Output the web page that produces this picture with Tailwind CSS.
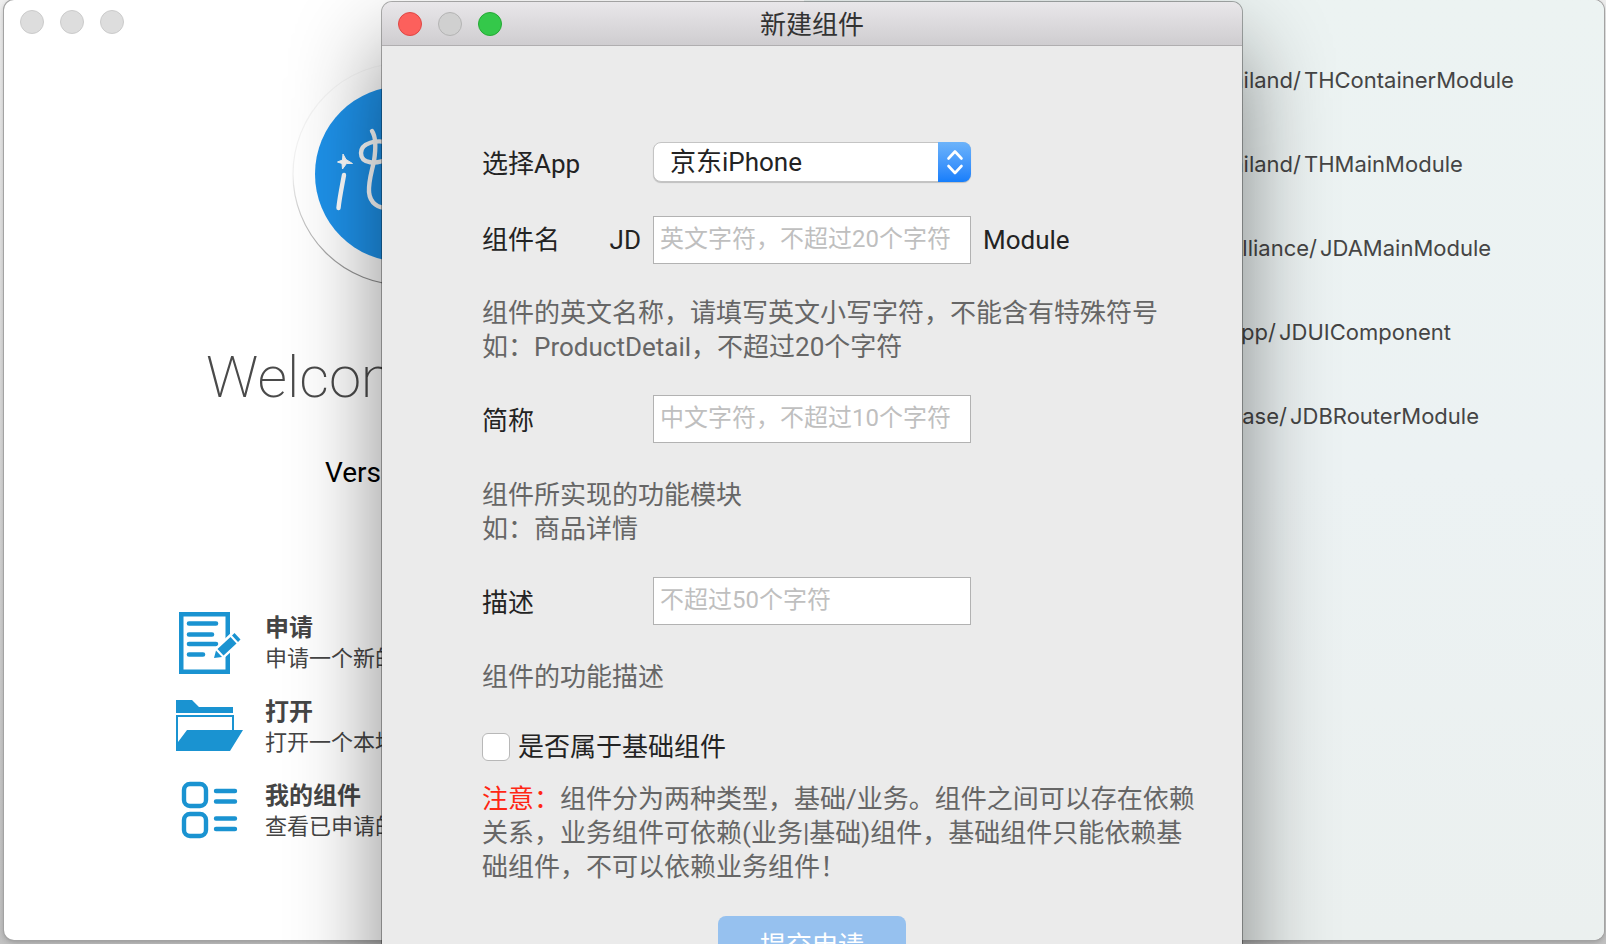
<!DOCTYPE html>
<html lang="zh-CN">
<head>
  <meta charset="UTF-8" />
  <meta name="viewport" content="width=device-width, initial-scale=1.0" />
  <title>新建组件</title>
  <script src="https://cdn.jsdelivr.net/npm/@tailwindcss/browser@4"></script>
</head>
<body class="font-['Roboto','Noto_Sans_CJK_SC',sans-serif] text-[#232323]">
  <main class="relative h-screen overflow-hidden bg-linear-to-b from-[#efefef] via-[#d8d8d8] to-[#c2c2c2] pb-1 pl-1 pr-[2px]">

    <!-- Welcome window -->
    <div class="flex h-full overflow-hidden rounded-[10px] bg-white shadow-[0_0_0_1px_#a3a3a3,0_2px_6px_#00000040]">
      <section class="relative w-1/2 shrink-0 pt-[62px]">
        <div class="absolute left-4 top-[10px] flex gap-4">
          <span class="size-6 rounded-full border border-[#cbcbcb] bg-[#dddddd]"></span>
          <span class="size-6 rounded-full border border-[#cbcbcb] bg-[#dddddd]"></span>
          <span class="size-6 rounded-full border border-[#cbcbcb] bg-[#dddddd]"></span>
        </div>

        <svg class="mx-auto size-56" viewBox="0 0 224 224" fill="none">
          <defs>
            <linearGradient id="ring" x1="0" y1="0" x2="0" y2="1">
              <stop offset="0" stop-color="#f8f8f8" />
              <stop offset=".5" stop-color="#f0f0f0" />
              <stop offset="1" stop-color="#8a8a8a" />
            </linearGradient>
          </defs>
          <circle cx="112" cy="112" r="111" fill="#fff" stroke="url(#ring)" stroke-width="1.2" />
          <circle cx="111" cy="112" r="88" fill="#1e92ea" />
          <g stroke="#fff" stroke-width="4.4" stroke-linecap="round">
            <path d="M52 113C50 124 47.500 136 46.500 146" />
            <path d="M80 69C84 75 84 86 82 99C79 113 76.500 119 77 130C78 141 86 147 98 146" />
            <path d="M98 81C84 77 69 81 69 91C69 102 84 103 98 96" />
          </g>
          <path d="M51 92L54 97.500L60.500 101.500L54.500 101.500L50.500 107L50 101.500L45.500 100L50.500 98Z" fill="#fff" stroke="#fff" />
        </svg>

        <h1 class="mx-auto mt-[55px] w-[396px] text-[58px] font-extralight leading-[72px] text-[#4a4a4a]">Welcome</h1>
        <p class="mx-auto mt-[42px] w-[158px] text-[28px] leading-9 text-black">Version</p>

        <nav class="mt-[120px] flex flex-col gap-5 pl-[169px] text-[#454545]">
          <a href="#" class="flex h-16 items-center gap-5">
            <svg class="size-[72px] shrink-0" viewBox="0 0 72 72" fill="#1a93d1">
              <path fill-rule="evenodd" d="M6 5H57V67H6ZM10.500 9.500V62.500H52.500V9.500Z" />
              <g stroke="#1a93d1" stroke-width="4.600" stroke-linecap="round">
                <path d="M16 16.500H43M16 27.500H39M16 37H43M16 47.500H30" />
              </g>
              <path d="M40 52L43 42L61 25L69 33L50 50Z" fill="#fff" stroke="#fff" stroke-width="3" />
              <path d="M41 51L43 43.500L49 50ZM44.500 42L57.500 30L63.500 36.500L50.500 48.500ZM59 28.500L61.500 26L67.500 32.500L65 35Z" />
            </svg>
            <span>
              <span class="block text-2xl font-bold leading-8">申请</span>
              <span class="block whitespace-nowrap text-[22px] leading-[30px]">申请一个新的组件</span>
            </span>
          </a>
          <a href="#" class="flex h-16 items-center gap-5">
            <svg class="size-[72px] shrink-0" viewBox="0 0 72 72" fill="#1a93d1">
              <path d="M3 9H19L26 16H60V22H3Z" />
              <path fill-rule="evenodd" d="M3 24H61V39H70L57 60H3ZM5 26V51L14 39H59V26Z" />
            </svg>
            <span>
              <span class="block text-2xl font-bold leading-8">打开</span>
              <span class="block whitespace-nowrap text-[22px] leading-[30px]">打开一个本地组件</span>
            </span>
          </a>
          <a href="#" class="flex h-16 items-center gap-5">
            <svg class="size-[72px] shrink-0" viewBox="0 0 72 72" fill="none" stroke="#1a93d1" stroke-width="4.400" stroke-linecap="round">
              <rect x="11" y="9" width="22" height="22" rx="6" />
              <rect x="11" y="39" width="22" height="22" rx="6" />
              <path d="M43 16H62M43 26.500H62M43 43.500H62M43 54H62" />
            </svg>
            <span>
              <span class="block text-2xl font-bold leading-8">我的组件</span>
              <span class="block whitespace-nowrap text-[22px] leading-[30px]">查看已申请的组件</span>
            </span>
          </a>
        </nav>
      </section>

      <!-- Recent modules -->
      <section class="grow bg-linear-to-b from-[#ecf3f2] via-[#ecf2f3] to-[#ebf0ef] pt-[38px] font-['Inter',sans-serif] text-[22px] text-[#454545]">
        <ul>
          <li class="flex h-[84px] items-center"><span class="w-[500px] pr-[3px] text-right">Thailand/</span>THContainerModule</li>
          <li class="flex h-[84px] items-center"><span class="w-[500px] pr-[3px] text-right">Thailand/</span>THMainModule</li>
          <li class="flex h-[84px] items-center"><span class="w-[516px] pr-[3px] text-right">Alliance/</span>JDAMainModule</li>
          <li class="flex h-[84px] items-center"><span class="w-[475px] pr-[3px] text-right">App/</span>JDUIComponent</li>
          <li class="flex h-[84px] items-center"><span class="w-[486px] pr-[3px] text-right">Base/</span>JDBRouterModule</li>
        </ul>
      </section>
    </div>

    <!-- New module dialog -->
    <div class="absolute inset-x-0 top-[2px] flex justify-center pl-[18px]">
      <div role="dialog" aria-labelledby="dialogTitle" class="w-[860px] rounded-t-[10px] bg-[#ebebeb] shadow-[0_0_0_1px_#00000050,0_44px_90px_#00000078]">
        <header class="relative flex h-11 items-center justify-center rounded-t-[10px] border-b border-[#b0aeb0] bg-linear-to-b from-[#e9e7ea] to-[#cfcdd0] pt-[2px]">
          <div class="absolute left-4 top-[10px] flex gap-4">
            <button type="button" aria-label="关闭" class="size-6 rounded-full border border-[#df4744] bg-[#fc605c]"></button>
            <button type="button" aria-label="最小化" disabled class="size-6 rounded-full border border-[#b4b4b4] bg-[#d0d0d0]"></button>
            <button type="button" aria-label="缩放" class="size-6 rounded-full border border-[#25a934] bg-[#34c84a]"></button>
          </div>
          <h2 id="dialogTitle" class="text-[26px] leading-[34px] text-[#333]">新建组件</h2>
        </header>

        <form class="px-[100px] pb-12 pt-24 text-[26px] leading-[34px]">
          <div class="grid grid-cols-[159px_318px_auto] items-center gap-x-3">
            <label for="app" class="pt-1">选择App</label>
            <div class="relative">
              <select id="app" class="block h-10 w-full appearance-none rounded-lg border border-[#c4c4c4] bg-white pl-4 leading-[34px] shadow-[0_1px_1px_#00000030]">
                <option>京东iPhone</option>
              </select>
              <span class="pointer-events-none absolute inset-y-0 right-0 flex w-[33px] items-center justify-center rounded-r-lg bg-linear-to-b from-[#6cb3fa] to-[#157efb]">
                <svg class="h-7 w-5" viewBox="0 0 20 28" fill="none" stroke="#fff" stroke-width="2.600" stroke-linecap="round" stroke-linejoin="round">
                  <path d="M3.500 10.500L10 3.500L16.500 10.500M3.500 18L10 25L16.500 18" />
                </svg>
              </span>
            </div>
          </div>

          <div class="mt-[34px] grid grid-cols-[159px_318px_auto] items-center gap-x-3">
            <div class="flex justify-between">
              <label for="name">组件名</label>
              <span>JD</span>
            </div>
            <input id="name" type="text" maxlength="20" placeholder="英文字符，不超过20个字符" class="h-12 border border-[#b2b2b2] bg-white px-[6px] pb-[2px] text-2xl placeholder:text-[#bfbfbf]" />
            <span>Module</span>
          </div>
          <p class="mt-8 whitespace-nowrap text-[#666]">组件的英文名称，请填写英文小写字符，不能含有特殊符号<br />如：ProductDetail，不超过20个字符</p>

          <div class="mt-[31px] grid grid-cols-[159px_318px_auto] items-center gap-x-3">
            <label for="alias" class="pt-1">简称</label>
            <input id="alias" type="text" maxlength="10" placeholder="中文字符，不超过10个字符" class="h-12 border border-[#b2b2b2] bg-white px-[6px] pb-[2px] text-2xl placeholder:text-[#bfbfbf]" />
          </div>
          <p class="mt-[35px] text-[#666]">组件所实现的功能模块<br />如：商品详情</p>

          <div class="mt-[31px] grid grid-cols-[159px_318px_auto] items-center gap-x-3">
            <label for="desc" class="pt-1">描述</label>
            <input id="desc" type="text" maxlength="50" placeholder="不超过50个字符" class="h-12 border border-[#b2b2b2] bg-white px-[6px] pb-[2px] text-2xl placeholder:text-[#bfbfbf]" />
          </div>
          <p class="mt-[35px] text-[#666]">组件的功能描述</p>

          <label class="mt-9 flex items-center gap-2">
            <input type="checkbox" class="size-7 appearance-none rounded-md border border-[#b8b8b8] bg-white checked:bg-[#157efb]" />
            是否属于基础组件
          </label>
          <p class="mt-[18px] whitespace-nowrap text-[#666]"><span class="text-[#ff2613]">注意：</span>组件分为两种类型，基础/业务。组件之间可以存在依赖<br />关系，业务组件可依赖(业务|基础)组件，基础组件只能依赖基<br />础组件，不可以依赖业务组件！</p>

          <button type="submit" class="mx-auto mt-8 block h-[60px] w-[188px] rounded-lg bg-[#96c1ef] text-white">提交申请</button>
        </form>
      </div>
    </div>
  </main>
</body>
</html>
